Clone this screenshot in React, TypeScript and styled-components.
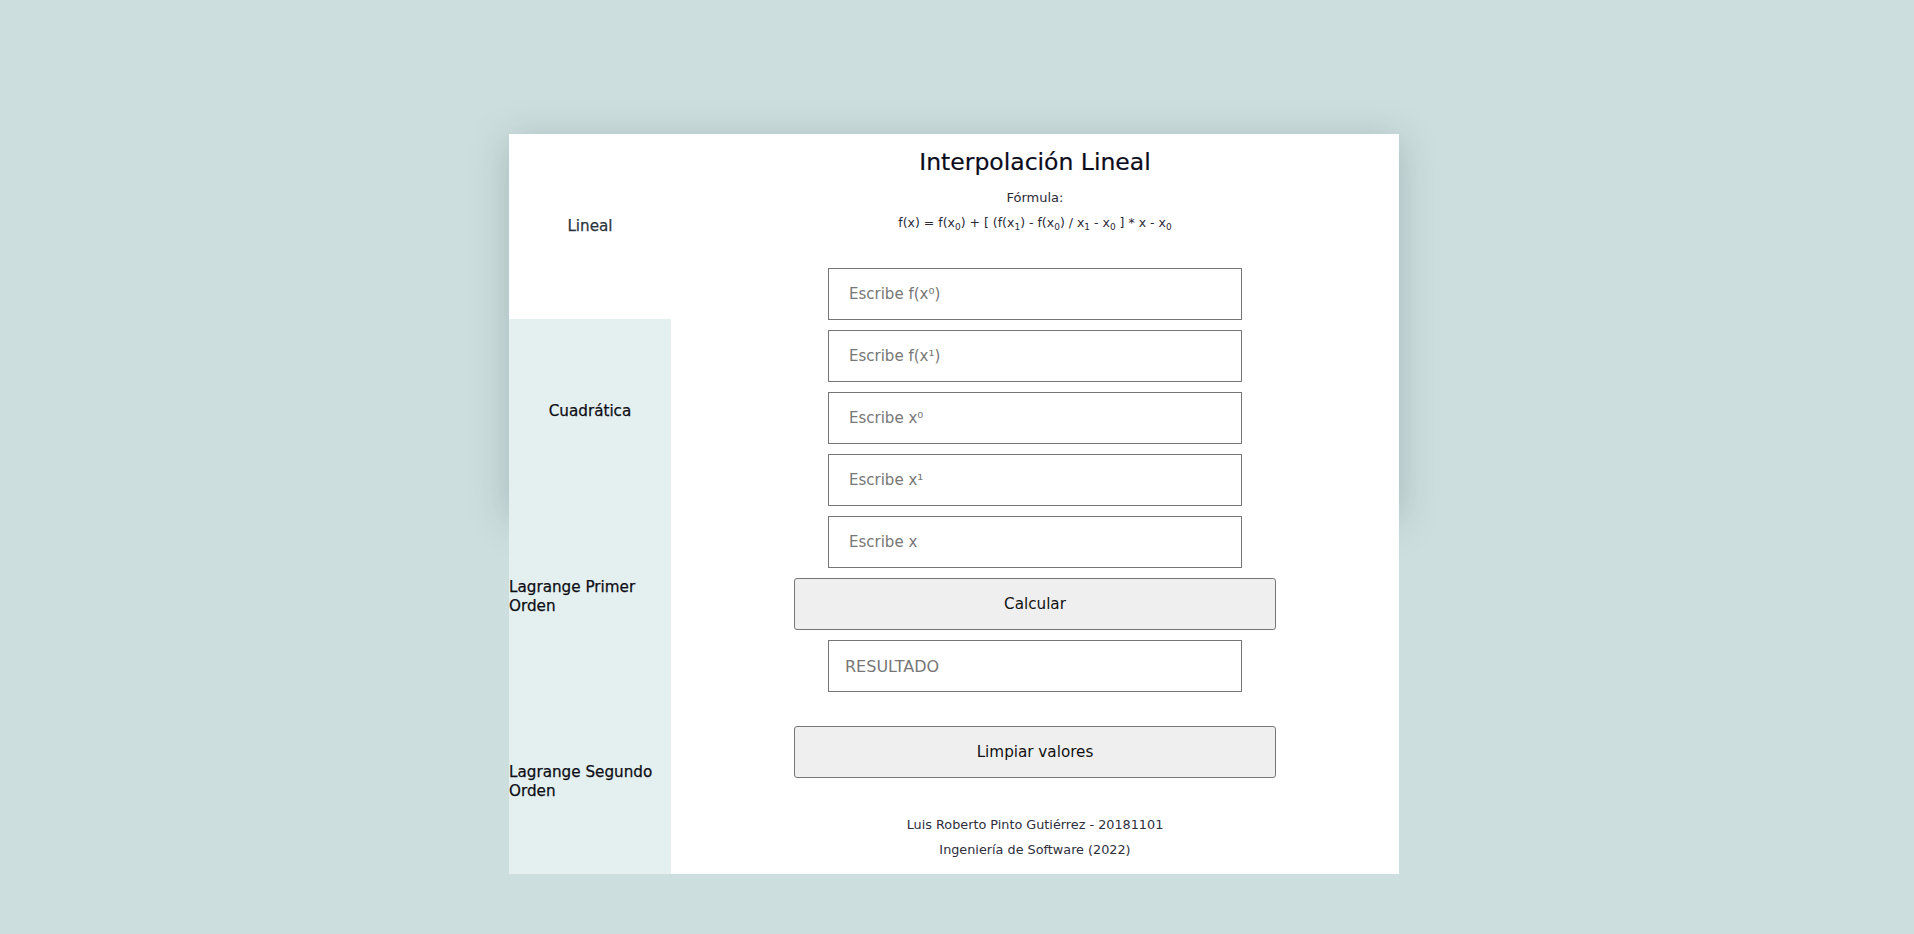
import React from "react";
import styled, { createGlobalStyle } from "styled-components";

const GlobalStyle = createGlobalStyle`
  html, body {
    margin: 0;
    padding: 0;
    background: #cddede;
    font-family: "DejaVu Sans", "Liberation Sans", sans-serif;
  }
  * { box-sizing: border-box; }
`;

const Page = styled.div`
  display: flex;
  justify-content: center;
  padding: 134px 6px 0 0;
  min-height: 934px;
`;

const Card = styled.div`
  width: 890px;
  height: 380px;
  background: #ffffff;
  box-shadow: 0 6px 36px rgba(60, 90, 95, 0.28);
  display: flex;
  align-items: flex-start;
`;

const Sidebar = styled.nav`
  width: 162px;
  flex: none;
  background: #e4f0f0;
  display: flex;
  flex-direction: column;
`;

const NavItem = styled.div<{ $active?: boolean }>`
  height: 185px;
  display: flex;
  align-items: center;
  justify-content: center;
  font-size: 15.2px;
  line-height: 19px;
  -webkit-text-stroke: 0.25px currentColor;
  color: ${(p) => (p.$active ? "#2b3442" : "#0d0d14")};
  background: ${(p) => (p.$active ? "#ffffff" : "transparent")};
`;

const Main = styled.main`
  flex: 1;
  min-height: 740px;
  background: #ffffff;
  display: flex;
  flex-direction: column;
  align-items: center;
  padding-top: 8px;
`;

const Title = styled.h1`
  margin: 0;
  font-size: 23.5px;
  font-weight: 400;
  line-height: 40px;
  color: #0b0b1c;
  -webkit-text-stroke: 0.2px currentColor;
`;

const SmallText = styled.p`
  margin: 0;
  font-size: 12.5px;
  line-height: 25px;
  color: #2a2a36;
`;

const FormulaLabel = styled(SmallText)`
  margin-top: 3px;
  font-size: 13px;
`;

const Sub = styled.sub`
  font-size: 9px;
  line-height: 0;
  vertical-align: -3px;
`;

const Form = styled.div`
  display: flex;
  flex-direction: column;
  align-items: center;
  gap: 10px;
  margin-top: 33px;
`;

const Field = styled.input<{ $pad?: number; $size?: number }>`
  width: 414px;
  height: 52px;
  border: 1px solid #767676;
  border-radius: 0;
  padding: 0 0 0 ${(p) => p.$pad ?? 20}px;
  font-family: inherit;
  font-size: ${(p) => p.$size ?? 15}px;
  color: #222;
  background: #fff;
  outline: none;
  &::placeholder {
    color: #777777;
  }
`;

const Button = styled.button<{ $top?: number }>`
  width: 482px;
  height: 52px;
  margin-top: ${(p) => p.$top ?? 0}px;
  border: 1px solid #767676;
  border-radius: 3px;
  background: #efefef;
  font-family: inherit;
  font-size: 15.2px;
  color: #111;
  cursor: pointer;
`;

const Footer = styled.footer`
  margin-top: 35px;
  display: flex;
  flex-direction: column;
  align-items: center;
`;

const FooterLine = styled(SmallText)`
  font-size: 12.8px;
  line-height: 24.5px;
  color: #2e2e3c;
`;

export default function App() {
  return (
    <>
      <GlobalStyle />
      <Page>
        <Card>
          <Sidebar>
            <NavItem $active>Lineal</NavItem>
            <NavItem>Cuadrática</NavItem>
            <NavItem>Lagrange Primer Orden</NavItem>
            <NavItem>Lagrange Segundo Orden</NavItem>
          </Sidebar>
          <Main>
            <Title>Interpolación Lineal</Title>
            <FormulaLabel>Fórmula:</FormulaLabel>
            <SmallText>
              f(x) = f(x<Sub>0</Sub>) + [ (f(x<Sub>1</Sub>) - f(x<Sub>0</Sub>) / x<Sub>1</Sub> - x
              <Sub>0</Sub> ] * x - x<Sub>0</Sub>
            </SmallText>
            <Form>
              <Field placeholder="Escribe f(x⁰)" />
              <Field placeholder="Escribe f(x¹)" />
              <Field placeholder="Escribe x⁰" />
              <Field placeholder="Escribe x¹" />
              <Field placeholder="Escribe x" />
              <Button>Calcular</Button>
              <Field placeholder="RESULTADO" $pad={16} $size={16} readOnly />
              <Button $top={24}>Limpiar valores</Button>
            </Form>
            <Footer>
              <FooterLine>Luis Roberto Pinto Gutiérrez - 20181101</FooterLine>
              <FooterLine>Ingeniería de Software (2022)</FooterLine>
            </Footer>
          </Main>
        </Card>
      </Page>
    </>
  );
}
